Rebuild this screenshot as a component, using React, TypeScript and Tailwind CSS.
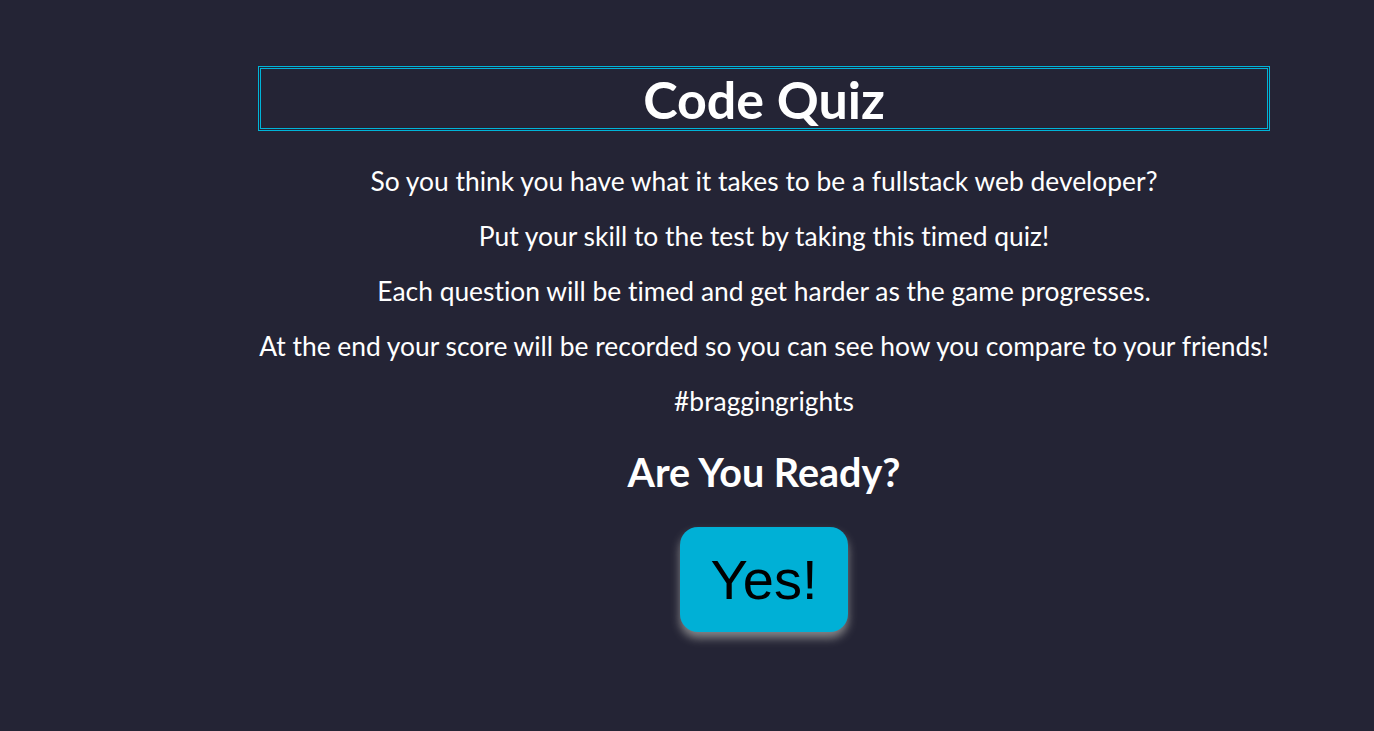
import React from "react";

const lines = [
  "So you think you have what it takes to be a fullstack web developer?",
  "Put your skill to the test by taking this timed quiz!",
  "Each question will be timed and get harder as the game progresses.",
  "At the end your score will be recorded so you can see how you compare to your friends!",
  "#braggingrights",
];

function App() {
  return (
    <main className="min-h-[731px] w-full bg-[#242435] text-white font-['Lato','Noto_Sans',sans-serif] [font-variant-ligatures:none]">
      <div className="ml-[258px] w-[1012px] pt-[66px] flex flex-col items-center">
        {/* title box */}
        <header className="w-full h-[65px] border-[3px] border-double border-[#00b4d8] flex items-center justify-center">
          <h1 className="text-[52px] font-bold leading-none">Code Quiz</h1>
        </header>
        <section className="w-full pt-[35px] flex flex-col items-center gap-[25px] text-[26.4px] leading-[30px] text-center">
          {lines.map((line) => (
            <p key={line}>{line}</p>
          ))}
        </section>
        <h2 className="mt-[34px] text-[39.5px] font-bold leading-[44px]">Are You Ready?</h2>
        <button
          type="button"
          className="mt-[33px] w-[168px] h-[105px] rounded-[18px] bg-[#00b0d6] text-black text-[56px] font-['Liberation_Sans',Arial,sans-serif] shadow-[0_6px_10px_rgba(150,150,150,0.85)]"
        >
          Yes!
        </button>
      </div>
    </main>
  );
}

export default App;
